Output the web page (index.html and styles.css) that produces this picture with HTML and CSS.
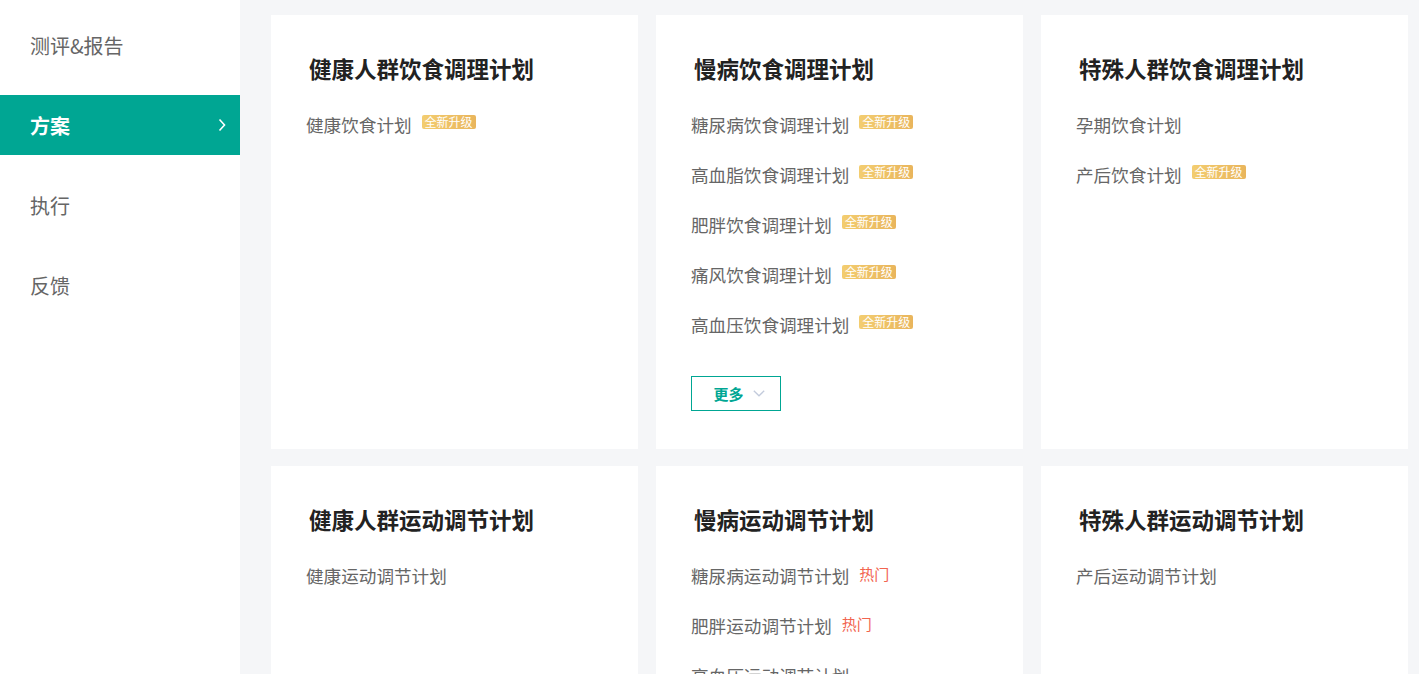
FILE: index.html
```html
<!DOCTYPE html>
<html lang="zh-CN">
<head>
    <meta charset="UTF-8">
    <meta name="viewport" content="width=device-width, initial-scale=1.0">
    <title>方案</title>
    <link rel="stylesheet" href="styles.css">
</head>
<body>
    <div class="page">
        <ul class="side-menu">
            <li class="menu-item">测评&amp;报告</li>
            <li class="menu-item active">
                方案
                <svg class="menu-arrow" width="8" height="14" viewBox="0 0 8 14"><path d="M1.5 1.5L6.5 7L1.5 12.5" fill="none" stroke="#fff" stroke-width="1.6"/></svg>
            </li>
            <li class="menu-item">执行</li>
            <li class="menu-item">反馈</li>
        </ul>

        <div class="content">
            <div class="card">
                <h2 class="card-title">健康人群饮食调理计划</h2>
                <ul class="plan-list">
                    <li>健康饮食计划<span class="badge">全新升级</span></li>
                </ul>
            </div>
            <div class="card">
                <h2 class="card-title">慢病饮食调理计划</h2>
                <ul class="plan-list">
                    <li>糖尿病饮食调理计划<span class="badge">全新升级</span></li>
                    <li>高血脂饮食调理计划<span class="badge">全新升级</span></li>
                    <li>肥胖饮食调理计划<span class="badge">全新升级</span></li>
                    <li>痛风饮食调理计划<span class="badge">全新升级</span></li>
                    <li>高血压饮食调理计划<span class="badge">全新升级</span></li>
                </ul>
                <button class="more-btn">
                    更多
                    <svg width="12" height="7" viewBox="0 0 12 7"><path d="M0.8 0.8L6 5.8L11.2 0.8" fill="none" stroke="#c3cbdc" stroke-width="1.3"/></svg>
                </button>
            </div>
            <div class="card">
                <h2 class="card-title">特殊人群饮食调理计划</h2>
                <ul class="plan-list">
                    <li>孕期饮食计划</li>
                    <li>产后饮食计划<span class="badge">全新升级</span></li>
                </ul>
            </div>

            <div class="card">
                <h2 class="card-title">健康人群运动调节计划</h2>
                <ul class="plan-list">
                    <li>健康运动调节计划</li>
                </ul>
            </div>
            <div class="card">
                <h2 class="card-title">慢病运动调节计划</h2>
                <ul class="plan-list">
                    <li>糖尿病运动调节计划<span class="hot">热门</span></li>
                    <li>肥胖运动调节计划<span class="hot">热门</span></li>
                    <li>高血压运动调节计划</li>
                    <li>高血脂运动调节计划</li>
                </ul>
            </div>
            <div class="card">
                <h2 class="card-title">特殊人群运动调节计划</h2>
                <ul class="plan-list">
                    <li>产后运动调节计划</li>
                </ul>
            </div>
        </div>
    </div>
</body>
</html>
```

FILE: styles.css
```css
html, body {
    margin: 0;
    padding: 0;
    height: 100%;
    overflow: hidden;
}
body {
    font-family: "Noto Sans CJK SC", "Noto Sans", sans-serif;
    background-color: #f5f6f8;
    color: #666;
}
.page {
    display: flex;
    min-height: 100%;
}
.side-menu {
    list-style: none;
    margin: 0;
    padding: 15px 0 0;
    width: 240px;
    flex-shrink: 0;
    background-color: #fff;
    display: flex;
    flex-direction: column;
    gap: 20px;
}
.menu-item {
    height: 60px;
    padding: 0 30px;
    display: flex;
    align-items: center;
    justify-content: space-between;
    font-size: 20px;
    color: #666;
    cursor: pointer;
}
.menu-item.active {
    background-color: #00a693;
    color: #fff;
    font-weight: bold;
    padding-right: 14px;
}
.content {
    flex: 1;
    padding: 15px 11px 0 31px;
    display: grid;
    grid-template-columns: repeat(3, 367px);
    grid-auto-rows: 434px;
    column-gap: 18px;
    row-gap: 17px;
}
.card {
    background-color: #fff;
    padding: 38px 35px 0;
}
.card-title {
    margin: 0 0 16px;
    padding-left: 3px;
    font-size: 22.5px;
    line-height: 30px;
    font-weight: bold;
    color: #222;
}
.plan-list {
    list-style: none;
    margin: 0;
    padding: 0;
}
.plan-list li {
    height: 50px;
    display: flex;
    align-items: center;
    font-size: 17.6px;
    color: #666;
}
.badge {
    margin-left: 10px;
    margin-top: -4px;
    padding: 0 3px;
    height: 14px;
    line-height: 14px;
    font-size: 12px;
    color: #fff;
    border-radius: 2px;
    background: linear-gradient(90deg, #f3cd70, #e9b55c);
}
.hot {
    margin-left: 10px;
    margin-top: -4px;
    font-size: 15px;
    color: #f2644f;
}
.more-btn {
    margin-top: 27px;
    width: 90px;
    height: 35px;
    border: 1px solid #00a693;
    background-color: #fff;
    color: #00a693;
    font-family: inherit;
    font-size: 15px;
    font-weight: bold;
    display: flex;
    align-items: center;
    justify-content: center;
    gap: 9px;
    cursor: pointer;
    padding: 0 0 0 6px;
}
```
